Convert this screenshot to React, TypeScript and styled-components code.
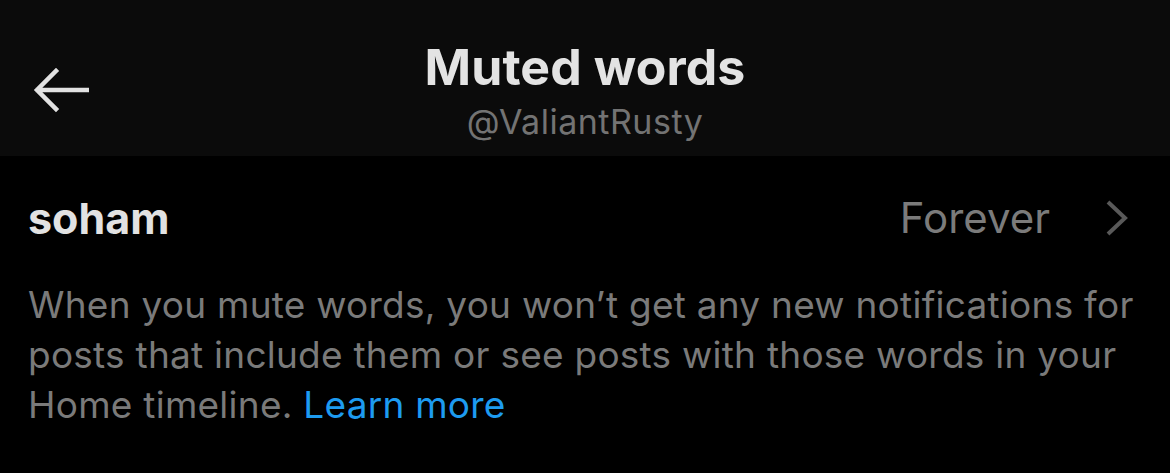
import React from 'react';
import styled, { createGlobalStyle } from 'styled-components';

const GlobalStyle = createGlobalStyle`
  html, body {
    margin: 0;
    padding: 0;
    background: #000;
  }
  body {
    font-family: Inter, "Noto Sans", "Liberation Sans", sans-serif;
    -webkit-font-smoothing: antialiased;
  }
`;

const Page = styled.div`
  width: 1170px;
  min-height: 473px;
  background: #000;
`;

const Header = styled.header`
  display: grid;
  grid-template-columns: 1fr auto 1fr;
  height: 156px;
  box-sizing: border-box;
  padding-top: 37px;
  background: #0b0b0b;
`;

const BackButton = styled.button`
  justify-self: start;
  align-self: start;
  margin: 30px 0 0 33px;
  padding: 0;
  border: 0;
  background: none;
  color: #e2e2e2;
  cursor: pointer;
  line-height: 0;
`;

const TitleBlock = styled.div`
  display: flex;
  flex-direction: column;
  align-items: center;
`;

const Title = styled.h1`
  margin: 0;
  font-size: 50px;
  line-height: 60px;
  font-weight: 700;
  color: #e3e3e3;
  letter-spacing: 0.1px;
`;

const Handle = styled.div`
  margin-top: 5px;
  font-size: 34px;
  line-height: 40px;
  color: #737373;
  letter-spacing: 0.5px;
`;

const Row = styled.div`
  display: flex;
  align-items: center;
  padding: 37px 40px 0 28px;
  height: 50px;
`;

const Word = styled.span`
  flex: 1;
  font-size: 43px;
  line-height: 50px;
  font-weight: 700;
  color: #e2e2e2;
`;

const Duration = styled.span`
  font-size: 42px;
  line-height: 50px;
  color: #7b7b7b;
  margin-right: 55px;
`;

const Chevron = styled.svg`
  display: block;
  color: #595959;
`;

const Note = styled.p`
  margin: 37px 0 0;
  padding: 0 28px;
  font-size: 37px;
  line-height: 50px;
  letter-spacing: 0.25px;
  color: #7a7a7a;
`;

const Link = styled.a`
  color: #1d9bf0;
  text-decoration: none;
`;

export default function App() {
  return (
    <Page>
      <GlobalStyle />
      <Header>
        <BackButton aria-label="Back">
          <svg width="56" height="46" viewBox="0 0 56 46" fill="none">
            <path
              d="M54 23H5M23 4L4 23l19 19"
              stroke="currentColor"
              strokeWidth="4.5"
              strokeLinecap="square"
            />
          </svg>
        </BackButton>
        <TitleBlock>
          <Title>Muted words</Title>
          <Handle>@ValiantRusty</Handle>
        </TitleBlock>
        <div />
      </Header>
      <Row>
        <Word>soham</Word>
        <Duration>Forever</Duration>
        <Chevron width="25" height="38" viewBox="0 0 25 38" fill="none">
          <path d="M3 3l17 16L3 35" stroke="currentColor" strokeWidth="4" />
        </Chevron>
      </Row>
      <Note>
        When you mute words, you won’t get any new notifications for posts that include them or see posts with those words in your Home timeline. <Link href="#">Learn more</Link>
      </Note>
    </Page>
  );
}
